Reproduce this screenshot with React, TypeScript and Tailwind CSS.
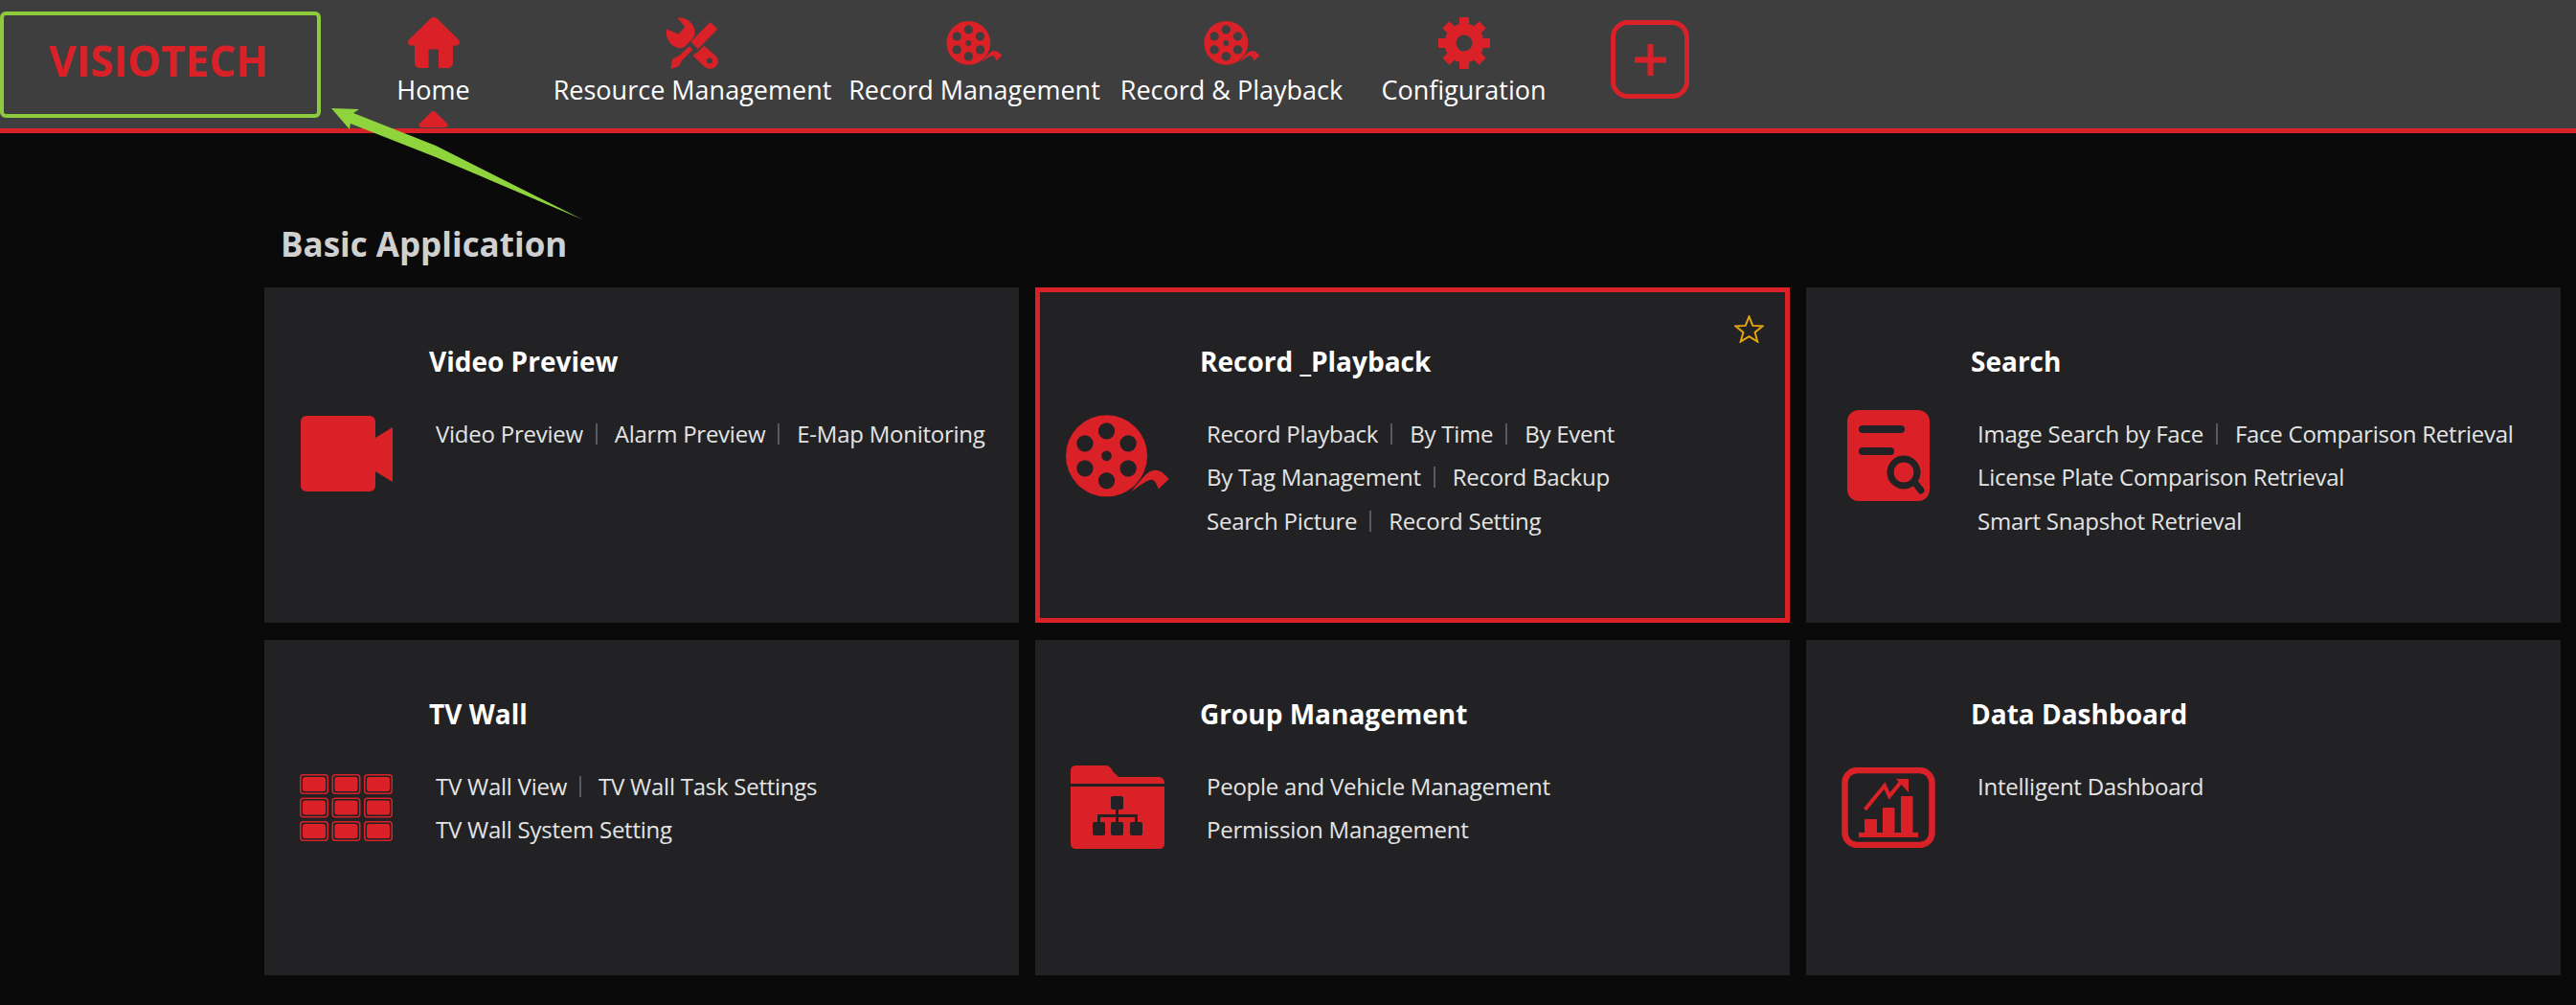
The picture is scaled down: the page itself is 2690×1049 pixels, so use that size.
import type { ReactNode } from 'react';

const font = "font-['Open_Sans','Noto_Sans',sans-serif]";

function circle(cx: number, cy: number, r: number) {
	return `M${cx - r} ${cy}a${r} ${r} 0 1 0 ${r * 2} 0a${r} ${r} 0 1 0 ${-r * 2} 0Z`;
}

const reelHoles = [
	[197, 90, 26],
	[265, 129, 26],
	[265, 207, 26],
	[197, 246, 26],
	[129, 207, 26],
	[129, 129, 26],
	[197, 168, 16],
];

function ReelIcon({ className }: { className: string }) {
	const d = circle(197, 168, 128) + reelHoles.map(([x, y, r]) => circle(x, y, r)).join('');
	return (
		<svg viewBox="69 40 325 257" className={className} fill="#da2128">
			<path fillRule="evenodd" d={d} />
			<path d="M273 281C300 252 322 214 350 213C368 213 382 228 393 241L360 272C355 258 348 240 335 243C315 248 295 268 273 281Z" />
		</svg>
	);
}

function HomeIcon({ className }: { className: string }) {
	return (
		<svg viewBox="0 0 54 53" className={className} fill="#da2128">
			<path d="M23.500 1.500C25.500 -0.500 28.500 -0.500 30.500 1.500L53 23.500C55 26 53.500 29.500 51 29.500L47 29.500L47 47C47 50.500 45 53 41.500 53L32 53L32 33.500L21.500 33.500L21.500 53L12.500 53C9 53 7 50.500 7 47L7 29.500L3 29.500C0.500 29.500 -1 26 1 23.500Z" />
		</svg>
	);
}

function ToolsIcon({ className }: { className: string }) {
	return (
		<svg viewBox="47 50 163 163" className={className} fill="#da2128">
			<path d="M82 52C110 48 138 70 136 102C135 110 130 117 124 123L108 140C102 146 95 148 88 147C64 145 42 120 47 88L85 103L105 80Z" />
			<path d="M185 65L208 88L146 150L124 127Z" />
			<path d="M119 141L130 152L96 186L85 205L60 213L65 183L87 171Z" />
			<path
				fillRule="evenodd"
				d="M148 157L165 140L203 172C215 184 210 208 188 212C176 214 168 208 162 202L130 171Z M174 187a9 9 0 1 0 18 0a9 9 0 1 0 -18 0Z"
			/>
		</svg>
	);
}

function GearIcon({ className }: { className: string }) {
	return (
		<svg viewBox="0 0 54 54" className={className} fill="#da2128">
			<circle cx="27" cy="27" r="14.500" fill="none" stroke="#da2128" strokeWidth="12" />
			{[0, 45, 90, 135, 180, 225, 270, 315].map(a => (
				<rect key={a} x="22" y="0" width="10" height="12" transform={`rotate(${a} 27 27)`} />
			))}
		</svg>
	);
}

function CameraIcon({ className }: { className: string }) {
	return (
		<svg viewBox="0 0 96 79" className={className} fill="#da2128">
			<rect x="0" y="0" width="78" height="79" rx="6" />
			<path d="M78 23L95 12.500C95.500 12 96 12.500 96 13L96 68C96 68.500 95.500 69 95 68.500L78 58Z" />
		</svg>
	);
}

function SearchDocIcon({ className }: { className: string }) {
	return (
		<svg viewBox="0 0 86 95" className={className}>
			<rect width="86" height="95" rx="12" fill="#da2128" />
			<rect x="12" y="16" width="48" height="8" rx="4" fill="#222224" />
			<rect x="12" y="39" width="37" height="8" rx="4" fill="#222224" />
			<circle cx="59" cy="65" r="14" fill="none" stroke="#222224" strokeWidth="7" />
			<path d="M70 75L77 84" stroke="#222224" strokeWidth="7" strokeLinecap="round" />
		</svg>
	);
}

function TvWallIcon({ className }: { className: string }) {
	const cols = [0, 33.500, 67];
	const rows = [0, 24.500, 49];
	return (
		<svg viewBox="0 0 97 70" className={className}>
			{rows.map(y =>
				cols.map(x => (
					<g key={`${x}-${y}`}>
						<rect x={x + 0.75} y={y + 0.75} width="28.500" height="19.500" rx="3" fill="none" stroke="#da2128" strokeWidth="1.500" />
						<rect x={x + 3} y={y + 3} width="24" height="15" rx="2.500" fill="#da2128" />
					</g>
				)),
			)}
		</svg>
	);
}

function FolderIcon({ className }: { className: string }) {
	return (
		<svg viewBox="0 0 98 87" className={className}>
			<path d="M0 19L0 6C0 2 2 0 6 0L36 0C40 0 42 2 44 6L50 12L92 12C96 12 98 15 98 19Z" fill="#da2128" />
			<path d="M0 22L98 22L98 81C98 85 96 87 92 87L6 87C2 87 0 85 0 81Z" fill="#da2128" />
			<rect x="42" y="32" width="13" height="14" rx="2" fill="#222224" />
			<rect x="23" y="59" width="13" height="14" rx="2" fill="#222224" />
			<rect x="42" y="59" width="13" height="14" rx="2" fill="#222224" />
			<rect x="62" y="59" width="13" height="14" rx="2" fill="#222224" />
			<path d="M48.500 45V59M29.500 59V52.500H68.500V59" fill="none" stroke="#222224" strokeWidth="3" />
		</svg>
	);
}

function DashboardIcon({ className }: { className: string }) {
	return (
		<svg viewBox="0 0 98 84" className={className} fill="#da2128">
			<rect x="3.500" y="3" width="91" height="78" rx="13" fill="none" stroke="#da2128" strokeWidth="6.500" />
			<rect x="18" y="68" width="62" height="5" />
			<rect x="24" y="54" width="13" height="14" rx="1" />
			<rect x="43" y="42" width="12.500" height="26" rx="1" />
			<rect x="62" y="30" width="12.500" height="38" rx="1" />
			<path d="M24.500 44L45 19L50 30L64 13" fill="none" stroke="#da2128" strokeWidth="4" />
			<path d="M57 12L70 12L70 26Z" />
		</svg>
	);
}

function ReelNav() {
	return <ReelIcon className="w-[59px] h-[46px]" />;
}

interface NavEntry {
	label: string;
	icon: ReactNode;
	className: string;
}

const navItems: NavEntry[] = [
	{ label: 'Home', icon: <HomeIcon className="w-[54px] h-[53px]" />, className: 'w-[75px] ml-[80px]' },
	{ label: 'Resource Management', icon: <ToolsIcon className="w-[54px] h-[54px]" />, className: 'w-[290px] ml-[88px]' },
	{ label: 'Record Management', icon: <ReelNav />, className: 'w-[265px] ml-[17px]' },
	{ label: 'Record & Playback', icon: <ReelNav />, className: 'w-[236px] ml-[18px]' },
	{ label: 'Configuration', icon: <GearIcon className="w-[54px] h-[54px]" />, className: 'w-[173px] ml-[38px]' },
];

interface CardEntry {
	title: string;
	icon: ReactNode;
	rows: string[][];
	active?: boolean;
}

const cards: CardEntry[] = [
	{
		title: 'Video Preview',
		icon: <CameraIcon className="ml-[33px] mt-[129px] w-[96px] h-[79px]" />,
		rows: [['Video Preview', 'Alarm Preview', 'E-Map Monitoring']],
	},
	{
		title: 'Record _Playback',
		icon: <ReelIcon className="ml-[27px] mt-[128px] w-[108px] h-[86px]" />,
		rows: [['Record Playback', 'By Time', 'By Event'], ['By Tag Management', 'Record Backup'], ['Search Picture', 'Record Setting']],
		active: true,
	},
	{
		title: 'Search',
		icon: <SearchDocIcon className="ml-[38px] mt-[123px] w-[86px] h-[95px]" />,
		rows: [['Image Search by Face', 'Face Comparison Retrieval'], ['License Plate Comparison Retrieval'], ['Smart Snapshot Retrieval']],
	},
	{
		title: 'TV Wall',
		icon: <TvWallIcon className="ml-[32px] mt-[135px] w-[97px] h-[70px]" />,
		rows: [['TV Wall View', 'TV Wall Task Settings'], ['TV Wall System Setting']],
	},
	{
		title: 'Group Management',
		icon: <FolderIcon className="ml-[32px] mt-[126px] w-[98px] h-[87px]" />,
		rows: [['People and Vehicle Management'], ['Permission Management']],
	},
	{
		title: 'Data Dashboard',
		icon: <DashboardIcon className="ml-[32px] mt-[128px] w-[98px] h-[84px]" />,
		rows: [['Intelligent Dashboard']],
	},
];

function Card({ card }: { card: CardEntry }) {
	return (
		<div className={`relative flex h-[350px] bg-[#222224] border-[5px] ${card.active ? 'border-[#da2128]' : 'border-transparent'}`}>
			<div className="w-[167px] shrink-0">{card.icon}</div>
			<div className="flex-1">
				<h3 className="mt-[52px] h-[40px] leading-[40px] text-[28px] font-bold text-white whitespace-nowrap">{card.title}</h3>
				<div className="mt-[33px] ml-[7px]">
					{card.rows.map(row => (
						<div key={row[0]} className="flex items-center h-[45.5px] text-[24px] tracking-[-0.25px] text-[#e4e4e4] whitespace-nowrap">
							{row.map((link, i) => (
								<div key={link} className="flex items-center">
									{i > 0 && <span className="w-[2px] h-[22px] bg-[#555a60] ml-[13px] mr-[18px]" />}
									<span>{link}</span>
								</div>
							))}
						</div>
					))}
				</div>
			</div>
			{card.active && (
				<svg viewBox="0 0 31 29" className="absolute top-[24px] right-[22px] w-[31px] h-[29px]">
					<polygon points="15.500,1.500 19.300,10.900 29.500,11.400 21.600,17.900 24.300,27.600 15.500,22.200 6.700,27.600 9.400,17.900 1.500,11.400 11.700,10.900" fill="none" stroke="#e8a40c" strokeWidth="2" />
				</svg>
			)}
		</div>
	);
}

export default function App() {
	return (
		<div className={`relative h-[1049px] w-[2690px] overflow-hidden bg-[#0a0a0a] ${font}`}>
			<header className="flex h-[139px] bg-[#3e3e3e] border-b-[5px] border-[#da2128]">
				<div className="mt-[12px] w-[335px] h-[111px] shrink-0 flex items-center justify-center pb-[10px] pr-[4px] border-4 border-[#8ecb3c] rounded-[6px]">
					<span className="text-[44px] font-bold text-[#da2128]">VISIOTECH</span>
				</div>
				{navItems.map(item => (
					<div key={item.label} className={`flex flex-col items-center shrink-0 pt-[18px] ${item.className}`}>
						<div className="flex items-center justify-center h-[53px]">{item.icon}</div>
						<span className="mt-[4px] h-[37px] leading-[37px] text-[27px] text-white whitespace-nowrap">{item.label}</span>
						{item.label === 'Home' && (
							<svg viewBox="0 0 31 17" className="mt-[4px] w-[31px] h-[17px] shrink-0" fill="#da2128">
								<path d="M13.500 0.800C14.700 -0.200 16.300 -0.200 17.500 0.800L31 14L29 17L2 17L0 14Z" />
							</svg>
						)}
					</div>
				))}
				<div className="mt-[21px] ml-[67px] w-[82px] h-[82px] flex items-center justify-center border-[5px] border-[#da2128] rounded-[18px]">
					<svg viewBox="0 0 33 33" className="w-[33px] h-[33px]" fill="#da2128">
						<rect x="0" y="13.500" width="33" height="6" />
						<rect x="13.500" y="0" width="6" height="33" />
					</svg>
				</div>
			</header>

			<main className="pl-[276px]">
				<h2 className="mt-[96px] ml-[17px] h-[40px] leading-[40px] text-[35px] font-bold text-[#d0d0d0]">Basic Application</h2>
				<div className="mt-[25px] grid grid-cols-[repeat(3,788px)] gap-x-[17px] gap-y-[18px]">
					{cards.map(card => (
						<Card key={card.title} card={card} />
					))}
				</div>
			</main>

			{/* annotation arrow over the logo */}
			<svg viewBox="0 0 2690 1049" className="absolute inset-0 w-[2690px] h-[1049px] pointer-events-none" fill="#8fd33d">
				<polygon points="346,113 375,114 369,118 455,152 608,229 455,164 366,129 365,135" />
			</svg>
		</div>
	);
}
